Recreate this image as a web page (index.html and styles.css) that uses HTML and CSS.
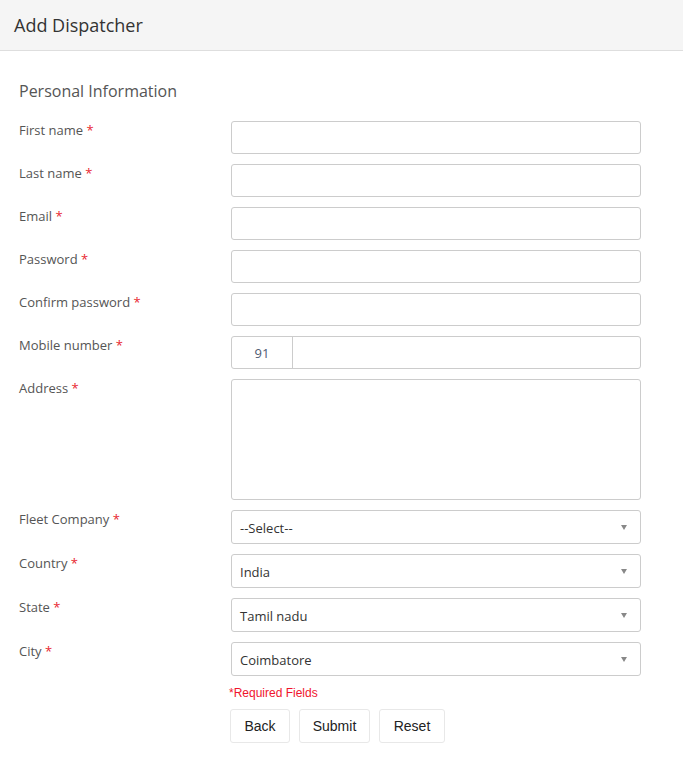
FILE: index.html
```html
<!DOCTYPE html>
<html>
<head>
<meta charset="utf-8">
<link rel="stylesheet" href="styles.css">
</head>
<body>
<div class="header"><h1 class="title">Add Dispatcher</h1></div>
<div class="content">
  <h2 class="section">Personal Information</h2>
  <div class="form">
    <div class="row"><label class="lbl">First name <span class="req">*</span></label><div class="input"></div></div>
    <div class="row"><label class="lbl">Last name <span class="req">*</span></label><div class="input"></div></div>
    <div class="row"><label class="lbl">Email <span class="req">*</span></label><div class="input"></div></div>
    <div class="row"><label class="lbl">Password <span class="req">*</span></label><div class="input"></div></div>
    <div class="row"><label class="lbl">Confirm password <span class="req">*</span></label><div class="input"></div></div>
    <div class="row"><label class="lbl">Mobile number <span class="req">*</span></label><div class="input phone"><span class="code">91</span><span class="num"></span></div></div>
    <div class="row"><label class="lbl">Address <span class="req">*</span></label><div class="input textarea"></div></div>
    <div class="row"><label class="lbl">Fleet Company <span class="req">*</span></label><div class="input select"><span class="val">--Select--</span><span class="caret"></span></div></div>
    <div class="row"><label class="lbl">Country <span class="req">*</span></label><div class="input select"><span class="val">India</span><span class="caret"></span></div></div>
    <div class="row"><label class="lbl">State <span class="req">*</span></label><div class="input select"><span class="val">Tamil nadu</span><span class="caret"></span></div></div>
    <div class="row"><label class="lbl">City <span class="req">*</span></label><div class="input select"><span class="val">Coimbatore</span><span class="caret"></span></div></div>
    <div class="row foot"><div></div><div class="actions-wrap"><div class="required">*Required Fields</div>
      <div class="actions"><button class="btn b-back">Back</button><button class="btn b-submit">Submit</button><button class="btn b-reset">Reset</button></div></div></div>
  </div>
</div>
</body>
</html>
```
FILE: styles.css
```css
* { box-sizing: border-box; }
body { margin: 0; font-family: "Open Sans", sans-serif; background: #fff; color: #555; }
.header { height: 51px; background: #f5f5f5; border-bottom: 1px solid #dedede; display: flex; align-items: center; padding-left: 14px; }
.title { margin: 0; font-size: 18px; font-weight: 400; color: #333; line-height: 24px; }
.content { padding: 28px 0 0 19px; }
.section { margin: 0 0 18px; font-size: 16px; font-weight: 400; color: #555; line-height: 24px; }
.form { display: flex; flex-direction: column; }
.row { display: grid; grid-template-columns: 212px 410px; margin-bottom: 10px; }
.lbl { font-size: 13px; line-height: 18px; padding-top: 0; color: #555; }
.req { color: #e8262f; }
.input { height: 33px; border: 1px solid #ccc; border-radius: 3px; background: #fff; }
.phone { display: flex; }
.code { width: 61px; border-right: 1px solid #ccc; display: flex; align-items: center; justify-content: center; font-size: 13px; color: #4f5b73; }
.textarea { height: 121px; }
.select { height: 34px; display: flex; align-items: center; justify-content: space-between; padding: 0 13px 0 8px; font-size: 13px; color: #333; }
.val { padding-top: 2px; }
.caret { width: 0; height: 0; border-left: 3.5px solid transparent; border-right: 3.5px solid transparent; border-top: 5px solid #888; margin-top: 1px; }
.foot { margin-top: -1px; }
.required { font-family: "Liberation Sans", Arial, sans-serif; font-size: 12px; color: #f0142d; line-height: 16px; margin-left: -2px; }
.actions { display: flex; gap: 9px; margin-top: 8px; margin-left: -1px; }
.btn { font-family: "Liberation Sans", Arial, sans-serif; font-size: 14px; color: #222; background: #fff; border: 1px solid #e8e8e8; border-radius: 3px; height: 34px; padding: 0; }
.b-back { width: 60px; }
.b-submit { width: 71px; }
.b-reset { width: 66px; }
```
